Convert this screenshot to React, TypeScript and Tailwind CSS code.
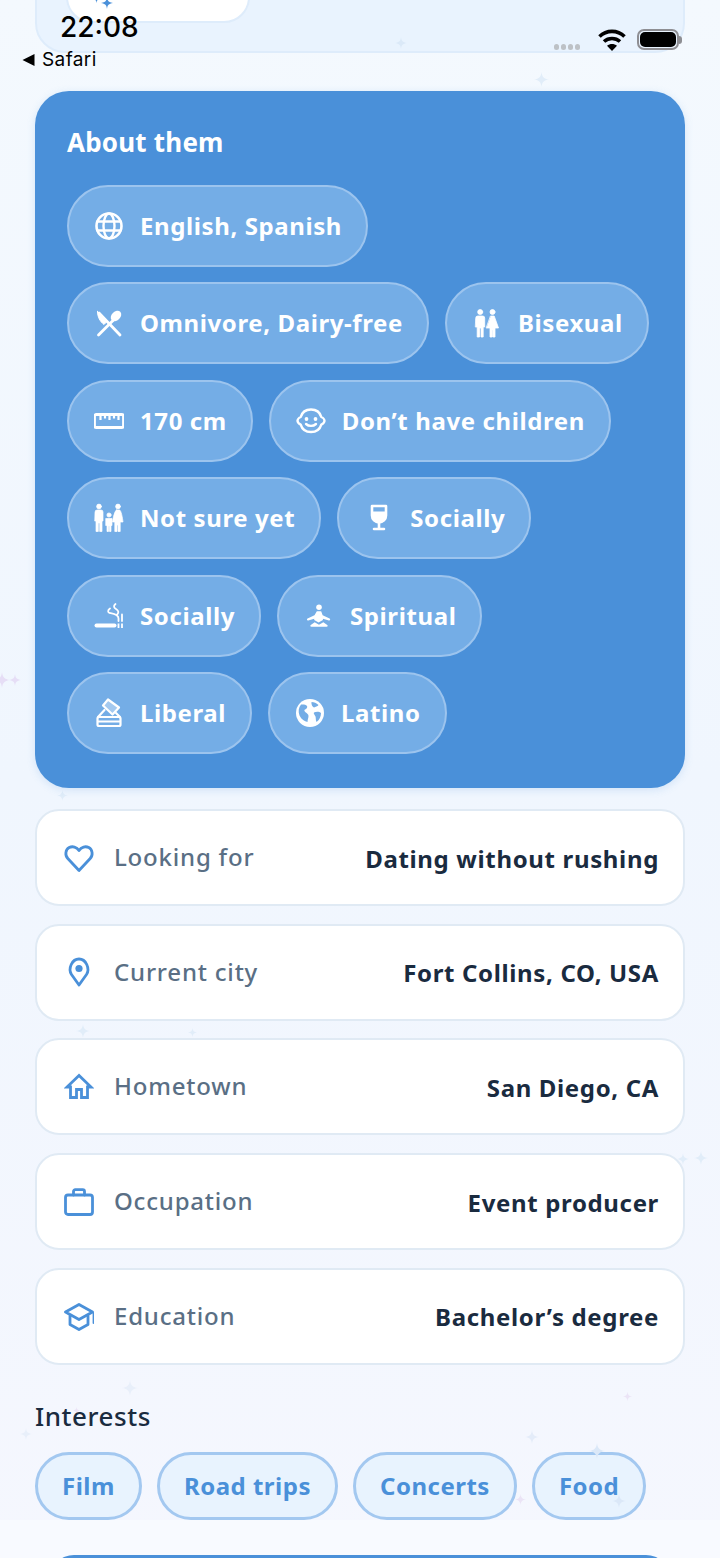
const font = { fontFamily: '"Noto Sans", sans-serif' };

function Svg({ children }: { children: React.ReactNode }) {
  return (
    <svg viewBox="0 0 30 30" fill="none" stroke="currentColor" strokeWidth="2" strokeLinecap="round" strokeLinejoin="round" className="h-[30px] w-[30px] shrink-0">
      {children}
    </svg>
  );
}

const GlobeIcon = () => (
  <Svg>
    <circle cx="15" cy="15" r="12.5" strokeWidth="2.6" />
    <ellipse cx="15" cy="15" rx="5.5" ry="12.5" strokeWidth="2.4" />
    <path d="M3.5 10.5h23M3.5 19.5h23" strokeWidth="2.4" />
  </Svg>
);

const FoodIcon = () => (
  <Svg>
    <path d="M4.5 27 19 12.5" strokeWidth="2.8" />
    <ellipse cx="22" cy="8" rx="4.4" ry="6" transform="rotate(45 22 8)" fill="currentColor" stroke="none" />
    <path d="M5 5 26 27" strokeWidth="2.8" />
    <path d="M3.5 3.5 13 13.5 10 16.5C6 13.5 3.5 9 3.5 3.5Z" fill="currentColor" strokeWidth="1" />
  </Svg>
);

const CoupleIcon = () => (
  <Svg>
    <g fill="currentColor" strokeWidth="0.8">
      <circle cx="8.2" cy="4" r="2.5" />
      <circle cx="20.5" cy="4" r="2.5" />
      <path d="M3.7 10a2 2 0 0 1 2-2h5a2 2 0 0 1 2 2v9h-1.500v10H9v-9H7.500v9H5.200V19H3.700Z" />
      <path d="M18.800 8h3.400L26.500 20H23v9h-2.200v-7h-.600v7H18v-9h-3.500Z" />
    </g>
  </Svg>
);

const RulerIcon = () => (
  <Svg>
    <rect x="0.5" y="8.5" width="29" height="13" rx="1.8" strokeWidth="2.8" />
    <path d="M6.500 9v5M11 9v3.500M15.500 9v5M20 9v3.500M24.500 9v5" strokeWidth="2.2" strokeLinecap="butt" />
  </Svg>
);

const BabyIcon = () => (
  <Svg>
    <path d="M15 3.500c5 0 9 3 10.300 7.500 1.600.6 3.200 2.600 3.200 3.800s-1.600 3.200-3.200 3.800C24 23 20 26 15 26S6 23 4.700 18.600C3.100 18 1.500 16 1.500 14.800S3.100 11.600 4.700 11C6 6.500 10 3.500 15 3.500Z" strokeWidth="2.4" />
    <circle cx="10.5" cy="13" r="1.9" fill="currentColor" stroke="none" />
    <circle cx="19.5" cy="13" r="1.9" fill="currentColor" stroke="none" />
    <path d="M10 18c2.800 2.500 7.200 2.500 10 0" strokeWidth="2.4" />
  </Svg>
);

const FamilyIcon = () => (
  <Svg>
    <g fill="currentColor" strokeWidth="0.7">
      <circle cx="5" cy="3.5" r="2.4" />
      <circle cx="24" cy="3.5" r="2.4" />
      <circle cx="15" cy="12" r="2.1" />
      <path d="M1 9a2 2 0 0 1 2-2h4a2 2 0 0 1 2 2v9H8v10.500H5.700V20H4.300v8.500H2V18H1Z" />
      <path d="M22.500 7h3c1.500 0 3 7.500 3.500 12h-2.800v9.500H24V22h-1v6.500h-2.200V19H18.500c.5-4.500 2.500-12 4-12Z" />
      <path d="M12 15.500h6v7h-1v6h-1.500v-5.500h-1v5.500H13v-6h-1Z" />
    </g>
  </Svg>
);

const WineIcon = () => (
  <Svg>
    <path d="M8 3h14v9.500a7 7 0 0 1-14 0Z" strokeWidth="2.6" />
    <path d="M8 8.500h14v4a7 7 0 0 1-14 0Z" fill="currentColor" stroke="none" />
    <path d="M15 19.500v6.500M10 26h10" strokeWidth="2.6" />
  </Svg>
);

const SmokeIcon = () => (
  <Svg>
    <path d="M2.500 24.500h18" strokeWidth="4" />
    <path d="M24.500 22.500v4.500M28 22.500v4.500" strokeWidth="1.8" strokeLinecap="butt" />
    <path d="M21.500 3c-2.500 2-1.500 4 .5 5 2.500 1.500 3 3.500 1.500 5M16 7.500c-2.500 1.500-2.500 4 0 4.500 3 .5 8.500 1 8.500 5.500 0 1 0 1.500 0 2.500M28 13.500c0 2 0 4.500 0 6.500" strokeWidth="1.8" />
  </Svg>
);

const MeditateIcon = () => (
  <Svg>
    <g fill="currentColor" stroke="none" transform="translate(2 2) scale(0.867)">
      <circle cx="15" cy="5" r="3.2" />
      <path d="M12.500 9.500h5l1.700 4.500 8 4c1.300.7.600 2.600-.8 2.200l-6.900-2v1.400l-5 2.800-5-2.800v-1.400l-6.900 2c-1.400.4-2.100-1.500-.8-2.200l8-4Z" />
      <path d="M5.500 25.500 10 22.200l5 2.800 5-2.800 4.500 3.300c1 .8.500 2-.8 2H6.300c-1.300 0-1.800-1.200-.8-2Z" />
    </g>
  </Svg>
);

const BallotIcon = () => (
  <Svg>
    <rect x="3.5" y="19" width="23" height="9" rx="1.5" strokeWidth="2.2" />
    <path d="M4 23.500h22" strokeWidth="2.2" />
    <path d="M4 19 10.500 12M22 15l4 4" strokeWidth="2.2" />
    <path d="M14 1.500 25 9.500 18.500 16.500 9 7.500Z" fill="currentColor" fillOpacity="0.35" strokeWidth="2.2" />
  </Svg>
);

const EarthIcon = () => (
  <Svg>
    <circle cx="15" cy="15" r="14" fill="currentColor" stroke="none" />
    <path d="M5.500 6.500c2 0 5-.5 6.500 1.500.8 1.200-.5 3-2 3.500-1.200.4-.5 2 .5 2.800 1.500 1.200 3 2 3 3.700 0 2-1 3.500-1 6-3-.5-6-2.500-8-6.500-1.500-4-1-8 1.500-11ZM16.500 4c2.500 0 5 1 7 3-1 1.500-3 1.500-4.500 2.500-1.500-.5-3-3-2.500-5.500ZM19 14.500c2-1 5.500-1 7 .5 0 3.500-1.500 7-4.500 9-1-2-.5-4-1-5.500-.5-1.500-2.500-3-1.500-4Z" fill="#74ade6" stroke="none" />
  </Svg>
);

const HeartIcon = () => (
  <Svg>
    <path d="M15 27.500 3.800 15.500C.7 12.200 1.400 6.700 5.200 4.600c3.300-1.800 7.500-.7 9.800 3 2.300-3.700 6.500-4.800 9.800-3 3.800 2.100 4.500 7.600 1.400 10.900Z" strokeWidth="2.8" />
  </Svg>
);

const PinIcon = () => (
  <Svg>
    <path d="M15 28 7.500 17.500C3.800 11.500 8 2 15 2s11.200 9.500 7.500 15.500Z" strokeWidth="2.8" />
    <circle cx="15" cy="11.5" r="3.6" fill="currentColor" stroke="none" />
  </Svg>
);

const HomeIcon = () => (
  <Svg>
    <path d="M15 3.500 3 15h3.500v10.500h6v-8h5v8h6V15H27Z" strokeWidth="2.8" strokeLinejoin="miter" strokeLinecap="butt" />
  </Svg>
);

const CaseIcon = () => (
  <Svg>
    <rect x="1.5" y="8" width="27" height="19.5" rx="2.5" strokeWidth="2.8" />
    <path d="M9.500 8V4.500a1.800 1.800 0 0 1 1.800-1.800h7.400a1.800 1.800 0 0 1 1.800 1.800V8" strokeWidth="2.8" />
  </Svg>
);

const GradIcon = () => (
  <Svg>
    <path d="M15 3.500 1.500 11 15 18.500 28.500 11Z" strokeWidth="2.8" />
    <path d="M6 15v8.500L15 28.500l9-5V15" strokeWidth="2.8" />
    <path d="M29.500 12v10" strokeWidth="1.8" />
  </Svg>
);

function Sparkle({ className }: { className: string }) {
  return (
    <svg viewBox="0 0 24 24" className={`absolute ${className}`} fill="currentColor">
      <path d="M12 0c.8 7.500 3.500 10.800 12 12-8.500 1.200-11.200 4.500-12 12-.8-7.500-3.500-10.800-12-12 8.500-1.200 11.200-4.500 12-12Z" />
    </svg>
  );
}

const sparkles = [
  'left-[395px] top-[37px] h-[12px] w-[12px] text-[#dbe9f8]',
  'left-[534px] top-[72px] h-[15px] w-[15px] text-[#e1edf9]',
  'left-[57px] top-[790px] h-[11px] w-[11px] text-[#e1edf9]',
  'left-[-6px] top-[672px] h-[16px] w-[16px] text-[#e6def6]',
  'left-[9px] top-[674px] h-[12px] w-[12px] text-[#e6def6]',
  'left-[76px] top-[1024px] h-[14px] w-[14px] text-[#e1edf9]',
  'left-[188px] top-[1028px] h-[9px] w-[9px] text-[#e1edf9]',
  'left-[677px] top-[1153px] h-[12px] w-[12px] text-[#e1edf9]',
  'left-[694px] top-[1151px] h-[14px] w-[14px] text-[#e1edf9]',
  'left-[122px] top-[1380px] h-[16px] w-[16px] text-[#e8effa]',
  'left-[73px] top-[1407px] h-[7px] w-[7px] text-[#ebe4f6]',
  'left-[20px] top-[1428px] h-[12px] w-[12px] text-[#e8effa]',
  'left-[623px] top-[1392px] h-[9px] w-[9px] text-[#ebe4f6]',
  'left-[525px] top-[1430px] h-[14px] w-[14px] text-[#e4ecf9]',
  'left-[515px] top-[1494px] h-[11px] w-[11px] text-[#ebe4f6]',
];

const chipRows: { icon: React.ReactNode; label: string }[][] = [
  [{ icon: <GlobeIcon />, label: 'English, Spanish' }],
  [
    { icon: <FoodIcon />, label: 'Omnivore, Dairy-free' },
    { icon: <CoupleIcon />, label: 'Bisexual' },
  ],
  [
    { icon: <RulerIcon />, label: '170 cm' },
    { icon: <BabyIcon />, label: 'Don’t have children' },
  ],
  [
    { icon: <FamilyIcon />, label: 'Not sure yet' },
    { icon: <WineIcon />, label: 'Socially' },
  ],
  [
    { icon: <SmokeIcon />, label: 'Socially' },
    { icon: <MeditateIcon />, label: 'Spiritual' },
  ],
  [
    { icon: <BallotIcon />, label: 'Liberal' },
    { icon: <EarthIcon />, label: 'Latino' },
  ],
];

const facts = [
  { icon: <HeartIcon />, label: 'Looking for', value: 'Dating without rushing' },
  { icon: <PinIcon />, label: 'Current city', value: 'Fort Collins, CO, USA' },
  { icon: <HomeIcon />, label: 'Hometown', value: 'San Diego, CA' },
  { icon: <CaseIcon />, label: 'Occupation', value: 'Event producer' },
  { icon: <GradIcon />, label: 'Education', value: 'Bachelor’s degree' },
];

const interests = ['Film', 'Road trips', 'Concerts', 'Food'];

function Chip({ icon, label }: { icon: React.ReactNode; label: string }) {
  return (
    <div className="flex h-[82px] items-center gap-[16px] rounded-full border-2 border-[#9cc4ee] bg-[#74ade6] pl-[25px] pr-[24px] text-white">
      {icon}
      <span className="text-[24px] font-bold tracking-[0.6px]">{label}</span>
    </div>
  );
}

function StatusBar() {
  return (
    <div className="absolute left-0 top-0 h-[80px] w-full text-black">
      <div className="absolute left-[60px] top-[10px] text-[28px] font-medium leading-[34px]" style={{ fontFamily: 'Inter, sans-serif' }}>22:08</div>
      <div className="absolute left-[22px] top-[49px] flex items-center gap-[7px]" style={{ fontFamily: 'Inter, sans-serif' }}>
        <svg viewBox="0 0 12 12" className="h-[12px] w-[13px]"><path d="M12 0v12L0 6Z" fill="black" /></svg>
        <span className="text-[19px] leading-[22px] tracking-[0.4px]">Safari</span>
      </div>
      <div className="absolute left-[554px] top-[44px] flex gap-[2px]">
        <span className="h-[6px] w-[5px] rounded-full bg-[#bdc1c6]" />
        <span className="h-[6px] w-[5px] rounded-full bg-[#bdc1c6]" />
        <span className="h-[6px] w-[5px] rounded-full bg-[#bdc1c6]" />
        <span className="h-[6px] w-[5px] rounded-full bg-[#bdc1c6]" />
      </div>
      <svg viewBox="0 0 28 24" className="absolute left-[598px] top-[28px] h-[24px] w-[28px]" fill="none" stroke="black" strokeWidth="3.6">
        <path d="M1.500 8.500C8.500 1.700 19.500 1.700 26.500 8.500" />
        <path d="M6 13.500c4.500-4 11.500-4 16 0" />
        <path d="M14 23 9 17.800c2.900-2.300 7.100-2.300 10 0Z" fill="black" stroke="none" />
      </svg>
      <div className="absolute left-[637px] top-[29px] flex items-center">
        <div className="h-[21px] w-[42px] rounded-[7px] border-[2px] border-[#8e8e93] p-[1px]">
          <div className="h-full w-full rounded-[5px] bg-black" />
        </div>
        <div className="h-[8px] w-[3px] rounded-r-full bg-[#8e8e93]" />
      </div>
    </div>
  );
}

export default function App() {
  return (
    <div className="relative h-[1558px] w-[720px] overflow-hidden bg-gradient-to-b from-[#f4f9fe] via-[#f0f6fe] to-[#f5f7fe]" style={font}>
      <div className="relative mx-[35px] -mt-[60px] h-[113px] rounded-[30px] border-2 border-[#deecfb] bg-[#e9f3fe]">
        <div className="ml-[29px] h-[81px] w-[184px] rounded-[26px] border-2 border-[#deecfb] bg-white" />
      </div>
      <Sparkle className="left-[101px] top-[-3px] h-[12px] w-[12px] text-[#4a90d9]" />
      <Sparkle className="left-[92px] top-[-6px] h-[9px] w-[9px] text-[#4a90d9]" />
      {sparkles.map(s => <Sparkle key={s} className={s} />)}

      <section className="relative mx-[35px] mt-[38px] h-[697px] rounded-[34px] bg-[#4a90d9] pl-[32px] pt-[33px] shadow-[0_2px_8px_rgba(74,144,217,0.18)]">
        <h2 className="mb-[25px] text-[26px] font-bold leading-[36px] tracking-[0.2px] text-white">About them</h2>
        <div className="flex flex-col gap-[15.4px]">
          {chipRows.map((row, i) => (
            <div key={i} className="flex gap-[16px]">
              {row.map(c => <Chip key={c.label} icon={c.icon} label={c.label} />)}
            </div>
          ))}
        </div>
      </section>

      <div className="relative mx-[35px] mt-[21px] flex flex-col gap-[17.7px]">
        {facts.map(f => (
          <div key={f.label} className="flex h-[97px] items-center justify-between rounded-[24px] border-2 border-[#e0eaf4] bg-white pl-[27px] pr-[24px]">
            <div className="flex items-center gap-[20px] text-[#5a6f85]">
              <span className="text-[#4a90d9]">{f.icon}</span>
              <span className="-mt-[1px] text-[24px] font-medium tracking-[0.8px]">{f.label}</span>
            </div>
            <span className="mt-[2px] text-[24px] font-bold tracking-[0.65px] text-[#1a2b3f]">{f.value}</span>
          </div>
        ))}
      </div>

      <h3 className="relative mx-[35px] mt-[33px] text-[26px] font-medium leading-[36px] tracking-[0.55px] text-[#1a2b3f]">Interests</h3>
      <div className="relative mx-[35px] mt-[18px] flex gap-[15px]">
        {interests.map(t => (
          <div key={t} className="flex h-[68px] items-center rounded-full border-[3px] border-[#a3c8f0] bg-[#e8f3fe] px-[24px] text-[24px] font-bold tracking-[0.5px] text-[#4a90d9]">{t}</div>
        ))}
      </div>
      <Sparkle className="left-[589px] top-[1443px] h-[16px] w-[16px] text-[#dbe8f8]" />
      <Sparkle className="left-[612px] top-[1494px] h-[14px] w-[14px] text-[#dbe8f8]" />

      <div className="absolute bottom-0 left-0 h-[38px] w-full bg-[#f8faff]">
        <div className="mx-[50px] mt-[35px] h-[40px] rounded-t-[24px] bg-[#4a90d9]" />
      </div>

      <StatusBar />
    </div>
  );
}
